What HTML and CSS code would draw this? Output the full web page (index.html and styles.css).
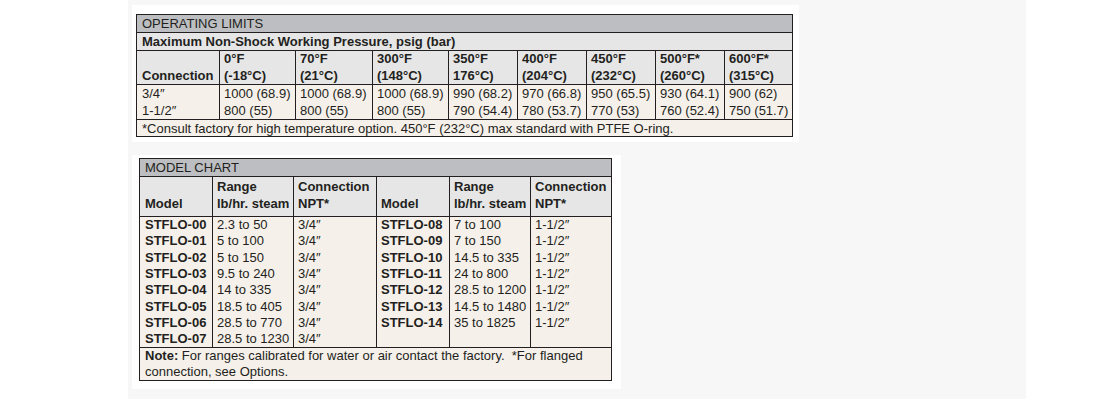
FILE: index.html
```html
<!DOCTYPE html>
<html lang="en">
<head>
<meta charset="utf-8">
<title>Operating Limits and Model Chart</title>
<link rel="stylesheet" href="styles.css">
</head>
<body>
<div class="panel">
  <div class="card card-limits">
    <table class="chart limits">
      <colgroup>
        <col class="w83"><col class="w76"><col class="w77"><col class="w76"><col class="w69"><col class="w69"><col class="w69"><col class="w69"><col class="w68">
      </colgroup>
      <tr class="title"><td colspan="9">OPERATING LIMITS</td></tr>
      <tr class="subtitle"><th colspan="9">Maximum Non-Shock Working Pressure, psig (bar)</th></tr>
      <tr class="heads">
        <th><br>Connection</th>
        <th>0°F<br>(-18°C)</th>
        <th>70°F<br>(21°C)</th>
        <th>300°F<br>(148°C)</th>
        <th>350°F<br>176°C)</th>
        <th>400°F<br>(204°C)</th>
        <th>450°F<br>(232°C)</th>
        <th>500°F*<br>(260°C)</th>
        <th>600°F*<br>(315°C)</th>
      </tr>
      <tr class="data">
        <td>3/4″</td><td>1000 (68.9)</td><td>1000 (68.9)</td><td>1000 (68.9)</td><td>990 (68.2)</td><td>970 (66.8)</td><td>950 (65.5)</td><td>930 (64.1)</td><td>900 (62)</td>
      </tr>
      <tr class="data">
        <td>1-1/2″</td><td>800 (55)</td><td>800 (55)</td><td>800 (55)</td><td>790 (54.4)</td><td>780 (53.7)</td><td>770 (53)</td><td>760 (52.4)</td><td>750 (51.7)</td>
      </tr>
      <tr class="foot"><td colspan="9">*Consult factory for high temperature option. 450°F (232°C) max standard with PTFE O-ring.</td></tr>
    </table>
  </div>

  <div class="card card-models">
    <table class="chart models">
      <colgroup>
        <col class="w73"><col class="w81"><col class="w83"><col class="w73"><col class="w81"><col class="w81">
      </colgroup>
      <tr class="title"><td colspan="6">MODEL CHART</td></tr>
      <tr class="heads">
        <th><br>Model</th>
        <th>Range<br>lb/hr. steam</th>
        <th>Connection<br>NPT*</th>
        <th><br>Model</th>
        <th>Range<br>lb/hr. steam</th>
        <th>Connection<br>NPT*</th>
      </tr>
      <tr class="row"><td class="model">STFLO-00</td><td>2.3 to 50</td><td>3/4″</td><td class="model">STFLO-08</td><td>7 to 100</td><td>1-1/2″</td></tr>
      <tr class="row"><td class="model">STFLO-01</td><td>5 to 100</td><td>3/4″</td><td class="model">STFLO-09</td><td>7 to 150</td><td>1-1/2″</td></tr>
      <tr class="row"><td class="model">STFLO-02</td><td>5 to 150</td><td>3/4″</td><td class="model">STFLO-10</td><td>14.5 to 335</td><td>1-1/2″</td></tr>
      <tr class="row"><td class="model">STFLO-03</td><td>9.5 to 240</td><td>3/4″</td><td class="model">STFLO-11</td><td>24 to 800</td><td>1-1/2″</td></tr>
      <tr class="row"><td class="model">STFLO-04</td><td>14 to 335</td><td>3/4″</td><td class="model">STFLO-12</td><td>28.5 to 1200</td><td>1-1/2″</td></tr>
      <tr class="row"><td class="model">STFLO-05</td><td>18.5 to 405</td><td>3/4″</td><td class="model">STFLO-13</td><td>14.5 to 1480</td><td>1-1/2″</td></tr>
      <tr class="row"><td class="model">STFLO-06</td><td>28.5 to 770</td><td>3/4″</td><td class="model">STFLO-14</td><td>35 to 1825</td><td>1-1/2″</td></tr>
      <tr class="row"><td class="model">STFLO-07</td><td>28.5 to 1230</td><td>3/4″</td><td></td><td></td><td></td></tr>
      <tr class="note"><td colspan="6"><p class="note-text"><b>Note:</b> For ranges calibrated for water or air contact the factory.&nbsp; *For flanged connection, see Options.</p></td></tr>
    </table>
  </div>
</div>
</body>
</html>
```

FILE: styles.css
```css
* { box-sizing: border-box; }

html, body {
  margin: 0;
  padding: 0;
  background: #ffffff;
}

body {
  font-family: "Liberation Sans", Arial, sans-serif;
  font-size: 13px;
  color: #231f20;
}

.panel {
  margin-left: 128px;
  width: 898px;
  height: 399px;
  background: #f7f7f7;
  padding: 5px 0 0 4px;
  display: flex;
  flex-direction: column;
  align-items: flex-start;
  gap: 13px;
}

.card {
  background: #ffffff;
}

.card-limits {
  padding: 9px 6px 5px 4px;
}

.card-models {
  padding: 3px 9px 8px 7px;
}

.chart {
  border-collapse: collapse;
  table-layout: fixed;
  font-size: 13px;
  line-height: 17px;
  color: #231f20;
}

.chart td,
.chart th {
  border: 1px solid #231f20;
  padding: 0 2px 0 4px;
  text-align: left;
  white-space: nowrap;
  overflow: hidden;
}

.chart td:first-child,
.chart th:first-child {
  padding-left: 5px;
}

.chart th { font-weight: bold; }

.limits { width: 656px; }
.models { width: 472px; }

.w68 { width: 68px; }
.w69 { width: 69px; }
.w73 { width: 73px; }
.w76 { width: 76px; }
.w77 { width: 77px; }
.w81 { width: 81px; }
.w83 { width: 83px; }

.title td {
  background: #bdbec1;
  font-weight: normal;
  height: 18px;
  line-height: 16px;
  vertical-align: middle;
}

.subtitle th {
  background: #e6e6e6;
  height: 18px;
  line-height: 16px;
  vertical-align: middle;
}

.heads th {
  background: #e6e6e6;
  vertical-align: top;
}

.limits .heads th {
  height: 34px;
  line-height: 16.5px;
}

.models .heads th {
  height: 40px;
  line-height: 17px;
  padding-top: 1px;
}

.data td {
  background: #f6f0ea;
  border-top: none;
  border-bottom: none;
  height: 17.5px;
  line-height: 17px;
  vertical-align: top;
}

.foot td {
  background: #f6f0ea;
  height: 17px;
  line-height: 15px;
  vertical-align: middle;
}

.row td {
  background: #f6f0ea;
  border-top: none;
  border-bottom: none;
  height: 16.375px;
  line-height: 16px;
  vertical-align: middle;
}

.row td.model { font-weight: bold; }

.note td {
  background: #f6f0ea;
  height: 33px;
  white-space: normal;
  vertical-align: top;
  padding-right: 2px;
}

.note-text {
  margin: 0;
  line-height: 16px;
}
```
